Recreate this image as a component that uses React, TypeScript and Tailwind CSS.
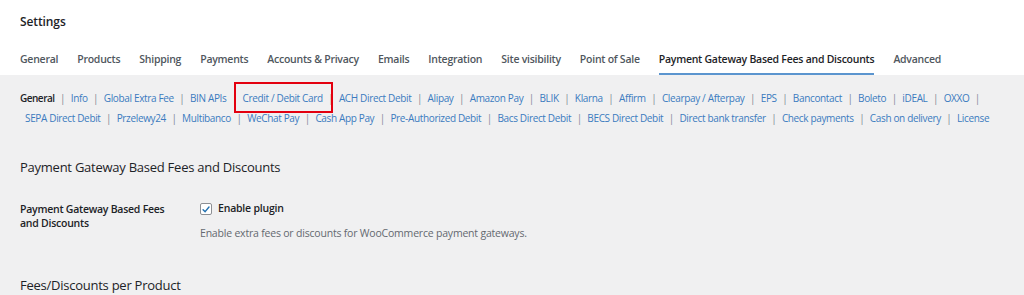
const tabs = [
  "General",
  "Products",
  "Shipping",
  "Payments",
  "Accounts & Privacy",
  "Emails",
  "Integration",
  "Site visibility",
  "Point of Sale",
  "Payment Gateway Based Fees and Discounts",
  "Advanced",
];

const rowOne = [
  "Info",
  "Global Extra Fee",
  "BIN APIs",
  "Credit / Debit Card",
  "ACH Direct Debit",
  "Alipay",
  "Amazon Pay",
  "BLIK",
  "Klarna",
  "Affirm",
  "Clearpay / Afterpay",
  "EPS",
  "Bancontact",
  "Boleto",
  "iDEAL",
  "OXXO",
];

const rowTwo = [
  "SEPA Direct Debit",
  "Przelewy24",
  "Multibanco",
  "WeChat Pay",
  "Cash App Pay",
  "Pre-Authorized Debit",
  "Bacs Direct Debit",
  "BECS Direct Debit",
  "Direct bank transfer",
  "Check payments",
  "Cash on delivery",
  "License",
];

const Sep = () => <span className="mx-[5.5px] text-[#7d8794]">|</span>;

const SubLink = ({ label, boxed }: { label: string; boxed?: boolean }) => (
  <span className="relative text-[#3b7bbf]">
    {label}
    {boxed && (
      <span className="absolute left-[-9px] right-[-10px] top-[-6px] bottom-[-5px] border-2 border-[#e3000f]" />
    )}
  </span>
);

export default function App() {
  return (
    <div className="w-[1024px] h-[295px] overflow-hidden bg-[#f0f0f1] font-['Open_Sans',sans-serif] text-[#1d2327]">
      <div className="bg-white px-5 pt-[13px]">
        <h1 className="text-[12px] tracking-[-0.1px] leading-[18px] font-semibold">Settings</h1>
        <nav className="mt-[19px] flex gap-[19px] whitespace-nowrap">
          {tabs.map((t) => {
            const active = t === "Payment Gateway Based Fees and Discounts";
            return (
              <span
                key={t}
                className={
                  active
                    ? "text-[10.5px] tracking-[-0.25px] leading-[18px] pb-[5px] border-b-2 border-[#5b95cf] text-[#1d2327] font-semibold"
                    : "text-[10.5px] tracking-[-0.25px] leading-[18px] pb-[5px] border-b-2 border-transparent text-[#50575e] font-semibold"
                }
              >
                {t}
              </span>
            );
          })}
        </nav>
      </div>

      <div className="px-5 pt-[13px]">
        <div className="text-[10px] tracking-[-0.35px] leading-[20px] flex whitespace-nowrap">
          <span className="font-semibold text-[#1d2327] tracking-[-0.5px]">General</span>
          {rowOne.map((l) => (
            <span key={l} className="flex">
              <Sep />
              <SubLink label={l} boxed={l === "Credit / Debit Card"} />
            </span>
          ))}
          <Sep />
        </div>
        <div className="text-[10px] tracking-[-0.35px] leading-[20px] flex whitespace-nowrap pl-[5px]">
          {rowTwo.map((l, i) => (
            <span key={l} className="flex">
              {i > 0 && <Sep />}
              <SubLink label={l} />
            </span>
          ))}
        </div>

        <h2 className="mt-[29px] text-[13px] tracking-[-0.25px] leading-[20px] font-medium">
          Payment Gateway Based Fees and Discounts
        </h2>

        <div className="mt-[25px] flex">
          <div className="w-[180px] text-[10.5px] tracking-[-0.25px] leading-[14px] font-semibold">
            Payment Gateway Based Fees
            <br />
            and Discounts
          </div>
          <div>
            <label className="flex items-center gap-[6px] h-[14px] text-[10.5px] tracking-[-0.2px] font-semibold">
              <span className="w-[12px] h-[12px] rounded-[2px] border border-[#8c8f94] bg-white flex items-center justify-center">
                <svg viewBox="0 0 12 12" className="w-[11px] h-[11px]">
                  <path d="M2.5 6.2 L5 8.6 L9.6 3" fill="none" stroke="#2271b1" strokeWidth="1.7" strokeLinecap="round" strokeLinejoin="round" />
                </svg>
              </span>
              Enable plugin
            </label>
            <p className="mt-[10px] text-[10.5px] tracking-[-0.2px] leading-[14px] text-[#646970]">
              Enable extra fees or discounts for WooCommerce payment gateways.
            </p>
          </div>
        </div>

        <h2 className="mt-[35px] text-[13px] tracking-[-0.25px] leading-[20px] font-medium">Fees/Discounts per Product</h2>
      </div>
    </div>
  );
}
